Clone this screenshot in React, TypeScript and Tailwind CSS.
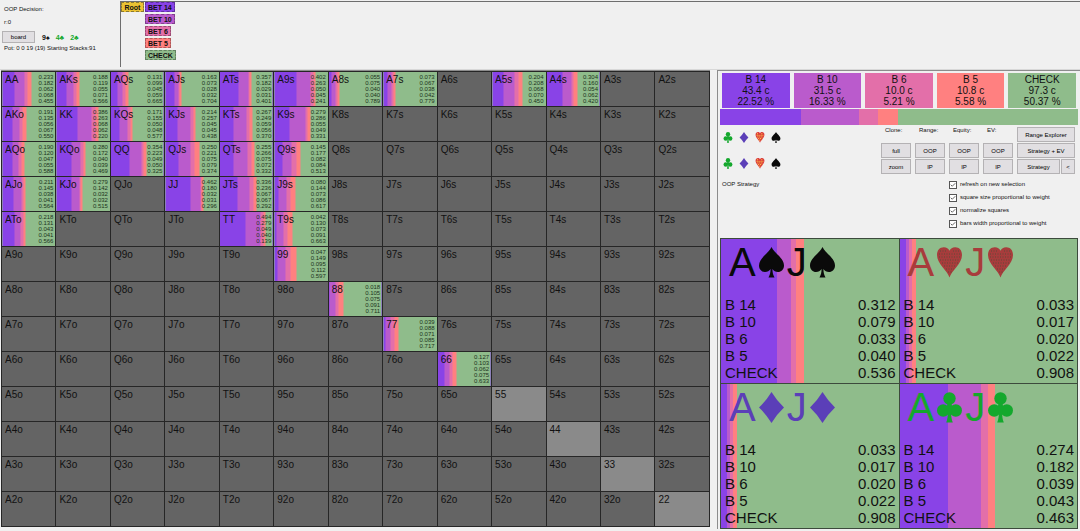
import React, { useState } from 'react';
import { Check } from 'lucide-react';

type Suit = 'spade' | 'heart' | 'diamond' | 'club';

interface Action {
  label: string;
  short: string;
  combos: string;
  percent: number;
  bg: string;
}

interface Combo {
  suit: Suit;
  color: string;
  values: number[];
}

const RANKS = ['A', 'K', 'Q', 'J', 'T', '9', '8', '7', '6', '5', '4', '3', '2'];

// Same order as the action list: big bet first, check last
const COLORS = ['#8943e7', '#ba5bcc', '#e36fa9', '#ff8080', '#8fbc8b'];

const ACTIONS: Action[] = [
  { label: 'BET 14', short: 'B 14', combos: '43.4 c', percent: 22.52, bg: 'bg-[#8943e7]' },
  { label: 'BET 10', short: 'B 10', combos: '31.5 c', percent: 16.33, bg: 'bg-[#ba5bcc]' },
  { label: 'BET 6', short: 'B 6', combos: '10.0 c', percent: 5.21, bg: 'bg-[#e36fa9]' },
  { label: 'BET 5', short: 'B 5', combos: '10.8 c', percent: 5.58, bg: 'bg-[#ff8080]' },
  { label: 'CHECK', short: 'CHECK', combos: '97.3 c', percent: 50.37, bg: 'bg-[#8fbc8b]' }
];

const STRATEGY: Record<string, number[]> = {
  AA: [0.233, 0.182, 0.062, 0.068, 0.455],
  AKs: [0.188, 0.119, 0.055, 0.071, 0.566],
  AQs: [0.131, 0.099, 0.045, 0.059, 0.665],
  AJs: [0.163, 0.073, 0.028, 0.032, 0.704],
  ATs: [0.357, 0.182, 0.029, 0.031, 0.401],
  A9s: [0.402, 0.263, 0.05, 0.045, 0.241],
  A8s: [0.055, 0.075, 0.04, 0.04, 0.789],
  A7s: [0.073, 0.067, 0.038, 0.042, 0.779],
  A5s: [0.204, 0.208, 0.068, 0.07, 0.45],
  A4s: [0.304, 0.16, 0.054, 0.062, 0.42],
  AKo: [0.191, 0.135, 0.056, 0.067, 0.55],
  KK: [0.386, 0.263, 0.068, 0.062, 0.22],
  KQs: [0.171, 0.155, 0.05, 0.048, 0.577],
  KJs: [0.214, 0.257, 0.045, 0.045, 0.438],
  KTs: [0.267, 0.249, 0.059, 0.056, 0.37],
  K9s: [0.279, 0.286, 0.055, 0.049, 0.331],
  AQo: [0.19, 0.12, 0.047, 0.055, 0.588],
  KQo: [0.28, 0.172, 0.04, 0.039, 0.469],
  QQ: [0.354, 0.223, 0.049, 0.05, 0.325],
  QJs: [0.25, 0.221, 0.075, 0.079, 0.374],
  QTs: [0.255, 0.266, 0.075, 0.072, 0.332],
  Q9s: [0.145, 0.177, 0.082, 0.084, 0.513],
  AJo: [0.211, 0.145, 0.038, 0.041, 0.564],
  KJo: [0.279, 0.142, 0.032, 0.032, 0.515],
  JJ: [0.462, 0.18, 0.032, 0.031, 0.296],
  JTs: [0.336, 0.236, 0.067, 0.067, 0.292],
  J9s: [0.08, 0.144, 0.073, 0.086, 0.617],
  ATo: [0.218, 0.131, 0.043, 0.041, 0.566],
  TT: [0.494, 0.279, 0.049, 0.04, 0.139],
  T9s: [0.042, 0.13, 0.073, 0.091, 0.663],
  '99': [0.047, 0.149, 0.095, 0.112, 0.597],
  '88': [0.018, 0.105, 0.075, 0.091, 0.711],
  '77': [0.039, 0.088, 0.071, 0.085, 0.717],
  '66': [0.127, 0.103, 0.062, 0.075, 0.633]
};

// Low pairs that are still in the range but have no strategy yet
const PALE_HANDS = ['55', '44', '33', '22'];

const COMBOS: Combo[] = [
  { suit: 'spade', color: 'text-[#0a0a0a]', values: [0.312, 0.079, 0.033, 0.04, 0.536] },
  { suit: 'heart', color: 'text-[#a83c3c]', values: [0.033, 0.017, 0.02, 0.022, 0.908] },
  { suit: 'diamond', color: 'text-[#5b3fb8]', values: [0.033, 0.017, 0.02, 0.022, 0.908] },
  { suit: 'club', color: 'text-[#14a82d]', values: [0.274, 0.182, 0.039, 0.043, 0.463] }
];

const SUIT_FILTER: { suit: Suit; color: string }[] = [
  { suit: 'club', color: 'text-[#14a82d]' },
  { suit: 'diamond', color: 'text-[#5b3fb8]' },
  { suit: 'heart', color: 'text-[#dc3c3c]' },
  { suit: 'spade', color: 'text-[#0a0a0a]' }
];

const OPTIONS = [
  'refresh on new selection',
  'square size proportional to weight',
  'normalize squares',
  'bars width proportional to weight'
];

const BUTTON = 'border border-[#b4b2b4] bg-[#e1dfe2] leading-none text-black';

function handName(row: number, col: number) {
  if (row === col) return RANKS[row] + RANKS[col];
  return row < col ? `${RANKS[row]}${RANKS[col]}s` : `${RANKS[col]}${RANKS[row]}o`;
}

// Hard-edged stripes, one per action
function stripes(values: number[]) {
  let pos = 0;
  const stops = values.map((v, i) => {
    const start = pos;
    pos = i === values.length - 1 ? 100 : pos + v * 100;
    return `${COLORS[i]} ${start}% ${pos}%`;
  });
  return { backgroundImage: `linear-gradient(to right, ${stops.join(', ')})` };
}

function SuitIcon({ suit, className, small }: { suit: Suit; className: string; small?: boolean }) {
  return (
    <svg viewBox="0 0 25 31" className={className} fill="currentColor" aria-hidden="true">
      {suit === 'spade' && (
        <path d="M12.5 0C10 6 0 11 0 18.500c0 4 2.800 6.500 6 6.500 2.400 0 4.300-1.100 5.600-3-.1 3.500-.7 6-2.100 8.500h6c-1.400-2.500-2-5-2.100-8.500 1.300 1.900 3.200 3 5.600 3 3.200 0 6-2.500 6-6.500C25 11 15 6 12.500 0z" />
      )}
      {suit === 'heart' && (
        <>
          <path d="M12.500 30.500C10.500 23.500 0 17 0 8 0 3 3 .3 6.800.3c2.800 0 4.700 1.200 5.700 3.400C13.500 1.500 15.400.3 18.200.3 22 .3 25 3 25 8c0 9-10.500 15.500-12.500 22.500z" />
          {small ? (
            <path
              d="M4 5h5M16 5h5M3 9.500h19M5 14h16M7 18.500h12M10 23h6"
              className="stroke-[#ffd84a]"
              fill="none"
              strokeWidth="2.500"
              strokeDasharray="3 2.500"
            />
          ) : (
            <path
              d="M3 4h7M16 4h7M2 7h21M2 10h21M3 13h20M5 16h16M7 19h12M9 22h8M11 25h4"
              className="stroke-[#5c4a38]"
              fill="none"
              strokeWidth="1"
              strokeDasharray="1 1.500"
            />
          )}
        </>
      )}
      {suit === 'diamond' && <path d="M12.500 0Q18 9 25 15.500 18 22 12.500 31 7 22 0 15.500 7 9 12.500 0z" />}
      {suit === 'club' && (
        <>
          <circle cx="12.500" cy="6.500" r="6.200" />
          <circle cx="6.200" cy="18.500" r="6.200" />
          <circle cx="18.800" cy="18.500" r="6.200" />
          <path d="M10.500 11h4l1 6-1.500 2c0 5 .6 8.500 1.800 11.500H9.200c1.200-3 1.800-6.500 1.800-11.500l-1.500-2z" />
        </>
      )}
    </svg>
  );
}

function Header() {
  return (
    <header className="flex border-b border-[#d8d8d8] pt-px">
      <div className="flex w-[120px] shrink-0 flex-col whitespace-nowrap pl-1 pt-1">
        <div className="leading-[9px]">OOP Decision:</div>
        <div className="mt-1 leading-[9px]">r:0</div>
        <div className="mt-1 flex items-center gap-[7px]">
          <button type="button" className={`${BUTTON} -ml-[2px] h-3 w-[33px]`}>
            board
          </button>
          <div className="flex gap-[6px] text-[7px] font-bold leading-none">
            <span>9♠</span>
            <span className="text-[#14a82d]">4♣</span>
            <span className="text-[#14a82d]">2♣</span>
          </div>
        </div>
        <div className="mt-px leading-[9px]">Pot: 0 0 19 (19) Starting Stacks:91</div>
      </div>
      <div className="mb-[2px] flex h-[66px] flex-1 items-start gap-px border-l border-t border-[#6e6e6e] text-[7px] font-bold leading-none">
        <button type="button" className="h-[10px] w-[23px] border border-dashed border-[#8c7a30] bg-[#ebc233]">
          Root
        </button>
        <div className="flex flex-col items-start gap-[2px]">
          {ACTIONS.map((a) => (
            <button
              type="button"
              key={a.label}
              className={`${a.bg} h-[10px] border border-dashed border-black/30 px-[2px]`}
            >
              {a.label}
            </button>
          ))}
        </div>
      </div>
    </header>
  );
}

function RangeMatrix() {
  return (
    <table className="w-full table-fixed border-collapse">
      <tbody>
        {RANKS.map((rank, row) => (
          <tr key={rank}>
            {RANKS.map((_, col) => {
              const hand = handName(row, col);
              const values = STRATEGY[hand];
              return (
                <td
                  key={hand}
                  className={`border border-[#262626] p-0 ${PALE_HANDS.includes(hand) ? 'bg-[#8a8a8a]' : 'bg-[#646464]'}`}
                  style={values ? stripes(values) : undefined}
                >
                  <div className="flex h-[34px] justify-between pl-[3px] pr-[2px] pt-[2px]">
                    <span className="text-[10px] leading-3">{hand}</span>
                    {values && (
                      <div className="text-right leading-[6px] text-[#1c331c]">
                        {values.map((v, i) => (
                          <div key={i}>{v.toFixed(3)}</div>
                        ))}
                      </div>
                    )}
                  </div>
                </td>
              );
            })}
          </tr>
        ))}
      </tbody>
    </table>
  );
}

function Summary() {
  return (
    <>
      <div className="grid grid-cols-5 gap-1 px-[2px] pt-[2px]">
        {ACTIONS.map((a) => (
          <div key={a.label} className={`${a.bg} py-px text-center text-[10px] leading-[11px]`}>
            <div>{a.short}</div>
            <div>{a.combos}</div>
            <div>{a.percent.toFixed(2)} %</div>
          </div>
        ))}
      </div>
      <div className="mt-px flex h-4">
        {ACTIONS.map((a) => (
          <div key={a.label} className={a.bg} style={{ width: `${a.percent}%` }} />
        ))}
      </div>
    </>
  );
}

function CloneColumn({ title, buttons }: { title: string; buttons: string[] }) {
  return (
    <div className="flex w-[30px] flex-col gap-px">
      <div className="h-[15px] pl-1 leading-[7px]">{title}</div>
      {buttons.map((b) => (
        <button type="button" key={b} className={`${BUTTON} h-[15px]`}>
          {b}
        </button>
      ))}
    </div>
  );
}

function Controls() {
  const [checked, setChecked] = useState<boolean[]>(OPTIONS.map(() => true));

  const toggle = (index: number) => {
    setChecked(checked.map((c, i) => (i === index ? !c : c)));
  };

  return (
    <div className="h-[113px] whitespace-nowrap pt-[2px]">
      <div className="flex justify-between pr-[3px]">
        <div className="flex flex-col gap-[15px] pl-[3px] pt-[5px]">
          {[0, 1].map((row) => (
            <div key={row} className="flex gap-[6px]">
              {SUIT_FILTER.map((s) => (
                <button type="button" key={s.suit} aria-label={s.suit} className={s.color}>
                  <SuitIcon suit={s.suit} className="h-[11px] w-[10px]" small />
                </button>
              ))}
            </div>
          ))}
        </div>
        <div className="flex gap-1">
          <CloneColumn title="Clone:" buttons={['full', 'zoom']} />
          <CloneColumn title="Range:" buttons={['OOP', 'IP']} />
          <CloneColumn title="Equity:" buttons={['OOP', 'IP']} />
          <CloneColumn title="EV:" buttons={['OOP', 'IP']} />
          <div className="flex w-[58px] flex-col gap-px">
            <button type="button" className={`${BUTTON} h-[15px]`}>
              Range Explorer
            </button>
            <button type="button" className={`${BUTTON} h-[15px]`}>
              Strategy + EV
            </button>
            <div className="flex gap-px">
              <button type="button" className={`${BUTTON} h-[15px] flex-1`}>
                Strategy
              </button>
              <button type="button" className={`${BUTTON} h-[15px] w-[14px]`}>
                &lt;
              </button>
            </div>
          </div>
        </div>
      </div>
      <div className="mt-[6px] flex justify-between pl-[2px]">
        <div className="leading-[9px]">OOP Strategy</div>
        <div className="flex w-[129px] flex-col gap-1">
          {OPTIONS.map((option, i) => (
            <label key={option} className="flex items-center gap-[3px] leading-[9px]">
              <span className="relative flex size-2">
                <input
                  type="checkbox"
                  checked={checked[i]}
                  onChange={() => toggle(i)}
                  className="size-2 appearance-none border border-[#555] bg-white"
                />
                {checked[i] && (
                  <Check className="pointer-events-none absolute inset-px size-[6px] text-[#333]" strokeWidth={3} />
                )}
              </span>
              {option}
            </label>
          ))}
        </div>
      </div>
    </div>
  );
}

function ComboCard({ combo }: { combo: Combo }) {
  return (
    <div
      className="flex h-[145px] flex-col justify-between border-b border-r border-[#3c4a3c] pb-[2px] pl-1 pr-[3px] pt-[3px]"
      style={stripes(combo.values)}
    >
      <div className={`${combo.color} flex items-center gap-[3px] pl-1 text-[40px] leading-10`}>
        <span>A</span>
        <SuitIcon suit={combo.suit} className="h-[31px] w-[25px]" />
        <span>J</span>
        <SuitIcon suit={combo.suit} className="h-[31px] w-[25px]" />
      </div>
      <div className="text-[15px] leading-[17px]">
        {ACTIONS.map((a, i) => (
          <div key={a.label} className="flex justify-between">
            <span>{a.short}</span>
            <span>{combo.values[i].toFixed(3)}</span>
          </div>
        ))}
      </div>
    </div>
  );
}

export default function App() {
  return (
    <div className="min-h-screen bg-[#f0f0f0] font-['Liberation_Sans',sans-serif] text-[6px] text-[#111]">
      <Header />
      <main className="flex gap-[7px] pl-px">
        <section className="flex-[709] border-t border-[#8c8c8c]">
          <RangeMatrix />
        </section>
        <section className="flex-[358] border-l border-t border-[#8c8c8c] px-[2px]">
          <Summary />
          <Controls />
          <div className="grid grid-cols-2 border-l border-t border-[#3c4a3c]">
            {COMBOS.map((combo) => (
              <ComboCard key={combo.suit} combo={combo} />
            ))}
          </div>
        </section>
      </main>
    </div>
  );
}
